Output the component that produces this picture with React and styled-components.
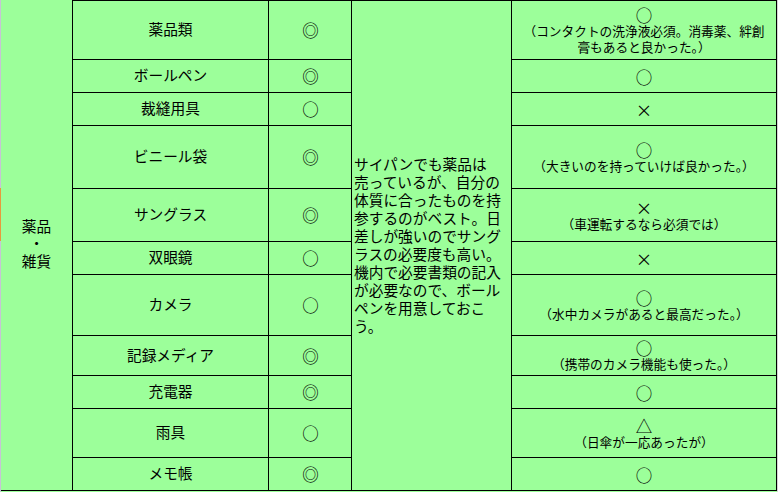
import React from 'react';
import styled, { createGlobalStyle } from 'styled-components';

const GREEN = '#9cff9a';
const LINE = '#000000';
const TEXT_FONT = '"Liberation Sans", "Noto Sans CJK JP", sans-serif';
const MARK_FONT = '"Noto Sans CJK JP", sans-serif';

const GlobalStyle = createGlobalStyle`
  html, body {
    margin: 0;
    padding: 0;
    background: ${GREEN};
    overflow: hidden;
  }
  body {
    font-family: ${TEXT_FONT};
    color: #000;
  }
`;

const ROW_HEIGHTS = [58, 32, 32, 62, 52, 32, 60, 39, 32, 48, 32];

const items = [
  { name: '薬品類', mark: '◎', result: '○', notes: ['（コンタクトの洗浄液必須。消毒薬、絆創', '膏もあると良かった。）'] },
  { name: 'ボールペン', mark: '◎', result: '○' },
  { name: '裁縫用具', mark: '○', result: '×' },
  { name: 'ビニール袋', mark: '◎', result: '○', notes: ['（大きいのを持っていけば良かった。）'] },
  { name: 'サングラス', mark: '◎', result: '×', notes: ['（車運転するなら必須では）'] },
  { name: '双眼鏡', mark: '○', result: '×' },
  { name: 'カメラ', mark: '○', result: '○', notes: ['（水中カメラがあると最高だった。）'] },
  { name: '記録メディア', mark: '◎', result: '○', notes: ['（携帯のカメラ機能も使った。）'] },
  { name: '充電器', mark: '◎', result: '○' },
  { name: '雨具', mark: '○', result: '△', notes: ['（日傘が一応あったが）'] },
  { name: 'メモ帳', mark: '◎', result: '○' },
];

const comment = [
  'サイパンでも薬品は',
  '売っているが、自分の',
  '体質に合ったものを持',
  '参するのがベスト。日',
  '差しが強いのでサング',
  'ラスの必要度も高い。',
  '機内で必要書類の記入',
  'が必要なので、ボール',
  'ペンを用意しておこ',
  'う。',
];

export default function App() {
  return (
    <>
      <GlobalStyle />
      <Sheet>
        <RowHeaderEdge />
        <Table>
          <CategoryCell>
            <span>薬品</span>
            <span>・</span>
            <span>雑貨</span>
          </CategoryCell>
          {items.map((item, i) => (
            <React.Fragment key={item.name}>
              <NameCell $row={i + 1}>{item.name}</NameCell>
              <MarkCell $row={i + 1}>
                <Mark>{item.mark}</Mark>
              </MarkCell>
              <ResultCell $row={i + 1}>
                <Mark $small={!!item.notes}>{item.result}</Mark>
                {item.notes && item.notes.map(n => <Note key={n}>{n}</Note>)}
              </ResultCell>
            </React.Fragment>
          ))}
          <CommentCell>
            <p>
              {comment.map((line, i) => (
                <React.Fragment key={i}>
                  {line}
                  {i < comment.length - 1 && <br />}
                </React.Fragment>
              ))}
            </p>
          </CommentCell>
        </Table>
        <RightEdge />
      </Sheet>
    </>
  );
}

const Sheet = styled.div`
  display: flex;
  align-items: flex-start;
  width: 778px;
  height: 492px;
`;

const RowHeaderEdge = styled.div`
  width: 1px;
  height: 492px;
  flex-shrink: 0;
  background: linear-gradient(
    to bottom,
    #c6c3d4 0px,
    #c6c3d4 188px,
    #e79a3c 188px,
    #e79a3c 241px,
    #c6c3d4 241px
  );
`;

const RightEdge = styled.div`
  width: 1px;
  height: 492px;
  flex-shrink: 0;
  background: #d4d4d4;
`;

const Table = styled.div`
  display: grid;
  grid-template-columns: 71px 195px 82px 159px 264px;
  grid-template-rows: ${ROW_HEIGHTS.map(h => `${h}px`).join(' ')};
  gap: 1px;
  padding: 1px 1px 1px 0;
  background: ${LINE};
  flex-shrink: 0;
`;

const Cell = styled.div`
  background: ${GREEN};
  display: flex;
  align-items: center;
  justify-content: center;
  font-size: 14.7px;
  line-height: 18px;
  white-space: nowrap;
`;

const CategoryCell = styled(Cell)`
  grid-column: 1;
  grid-row: 1 / span 11;
  margin-top: -1px;
  flex-direction: column;
  line-height: 17.5px;
`;

const NameCell = styled(Cell)`
  grid-column: 2;
  grid-row: ${({ $row }) => $row};
`;

const MarkCell = styled(Cell)`
  grid-column: 3;
  grid-row: ${({ $row }) => $row};
  padding-left: 1px;
`;

const Mark = styled.span`
  font-family: ${MARK_FONT};
  font-size: 16.5px;
  line-height: ${({ $small }) => ($small ? '18px' : '20px')};
  font-feature-settings: "fwid";
`;

const ResultCell = styled(Cell)`
  grid-column: 5;
  grid-row: ${({ $row }) => $row};
  flex-direction: column;
  padding-top: 1px;
`;

const Note = styled.span`
  font-size: 12.7px;
  line-height: 16px;
`;

const CommentCell = styled(Cell)`
  grid-column: 4;
  grid-row: 1 / span 11;
  justify-content: flex-start;
  padding-left: 2px;

  p {
    margin: 0;
    line-height: 18px;
    text-align: left;
  }
`;
